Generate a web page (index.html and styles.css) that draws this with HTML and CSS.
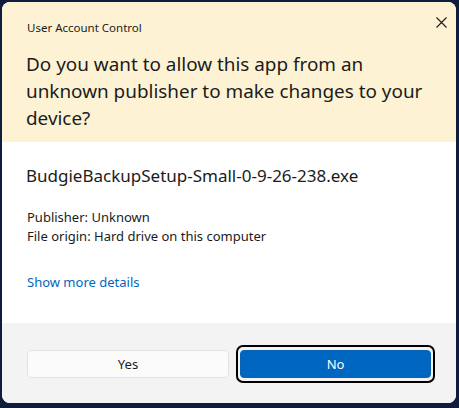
FILE: index.html
```html
<!DOCTYPE html>
<html lang="en">
<head>
<meta charset="utf-8">
<title>User Account Control</title>
<link rel="stylesheet" href="styles.css">
</head>
<body>
<div class="dialog">
  <div class="header">
    <div class="title-row">
      <span class="title">User Account Control</span>
      <button class="close" aria-label="Close">
        <svg width="11" height="11" viewBox="0 0 11 11"><path d="M0.5 0.5 L10.5 10.5 M10.5 0.5 L0.5 10.5" stroke="#1a1a1a" stroke-width="1.1" fill="none"/></svg>
      </button>
    </div>
    <h1 class="question">Do you want to allow this app from an unknown publisher to make changes to your device?</h1>
  </div>
  <div class="content">
    <div class="filename">BudgieBackupSetup-Small-0-9-26-238.exe</div>
    <div class="meta">
      <div>Publisher: Unknown</div>
      <div>File origin: Hard drive on this computer</div>
    </div>
    <a class="more" href="#">Show more details</a>
  </div>
  <div class="footer">
    <button class="btn btn-yes">Yes</button>
    <div class="focus-ring"><button class="btn btn-no">No</button></div>
  </div>
</div>
</body>
</html>
```
FILE: styles.css
```css
* { box-sizing: border-box; }
html, body { margin: 0; padding: 0; }
body {
  width: 459px;
  height: 408px;
  background: #0e1d3b;
  font-family: "Noto Sans", "Open Sans", sans-serif;
  color: #1b1b1b;
  padding: 2px 3px 0 2px;
}
.dialog {
  width: 454px;
  height: 401px;
  border-radius: 8px;
  overflow: hidden;
  display: flex;
  flex-direction: column;
  background: #ffffff;
}
.header {
  background: #fdf3d4;
  height: 140px;
  padding: 0 24px 0 24px;
}
.title-row {
  display: flex;
  justify-content: space-between;
  align-items: flex-start;
  height: 49px;
  padding-top: 18px;
}
.title {
  font-size: 11.5px;
  line-height: 16px;
  padding-left: 1px;
}
.close {
  border: none;
  background: transparent;
  padding: 0;
  margin-top: -3px;
  margin-right: -15px;
  width: 11px;
  height: 11px;
  display: flex;
}
.question {
  margin: 0;
  font-size: 18.9px;
  font-weight: 400;
  line-height: 27px;
  width: 400px;
}
.content {
  height: 181px;
  padding: 23px 24px 0 24px;
  display: flex;
  flex-direction: column;
}
.filename {
  font-size: 17px;
  line-height: 22px;
}
.meta {
  margin-top: 21px;
  font-size: 13px;
  line-height: 19px;
  padding-left: 1px;
}
.more {
  margin-top: 27px;
  font-size: 13px;
  line-height: 19px;
  color: #0067c0;
  text-decoration: none;
  align-self: flex-start;
  padding-left: 1px;
}
.footer {
  flex: 1;
  background: #f3f3f3;
  display: flex;
  align-items: flex-start;
  gap: 7px;
  padding: 27px 0 0 25px;
}
.btn {
  font-family: inherit;
  font-size: 13px;
  height: 28px;
  border-radius: 4px;
  padding: 0;
}
.btn-yes {
  width: 202px;
  background: #fbfbfb;
  border: 1px solid #e3e3e3;
  color: #1b1b1b;
}
.focus-ring {
  margin-top: -5px;
  padding: 3px 2px;
  border: 2px solid #000;
  border-radius: 7px;
}
.btn-no {
  width: 191px;
  background: #0067c0;
  border: 1px solid #0a63b3;
  color: #ffffff;
  display: block;
}
```
